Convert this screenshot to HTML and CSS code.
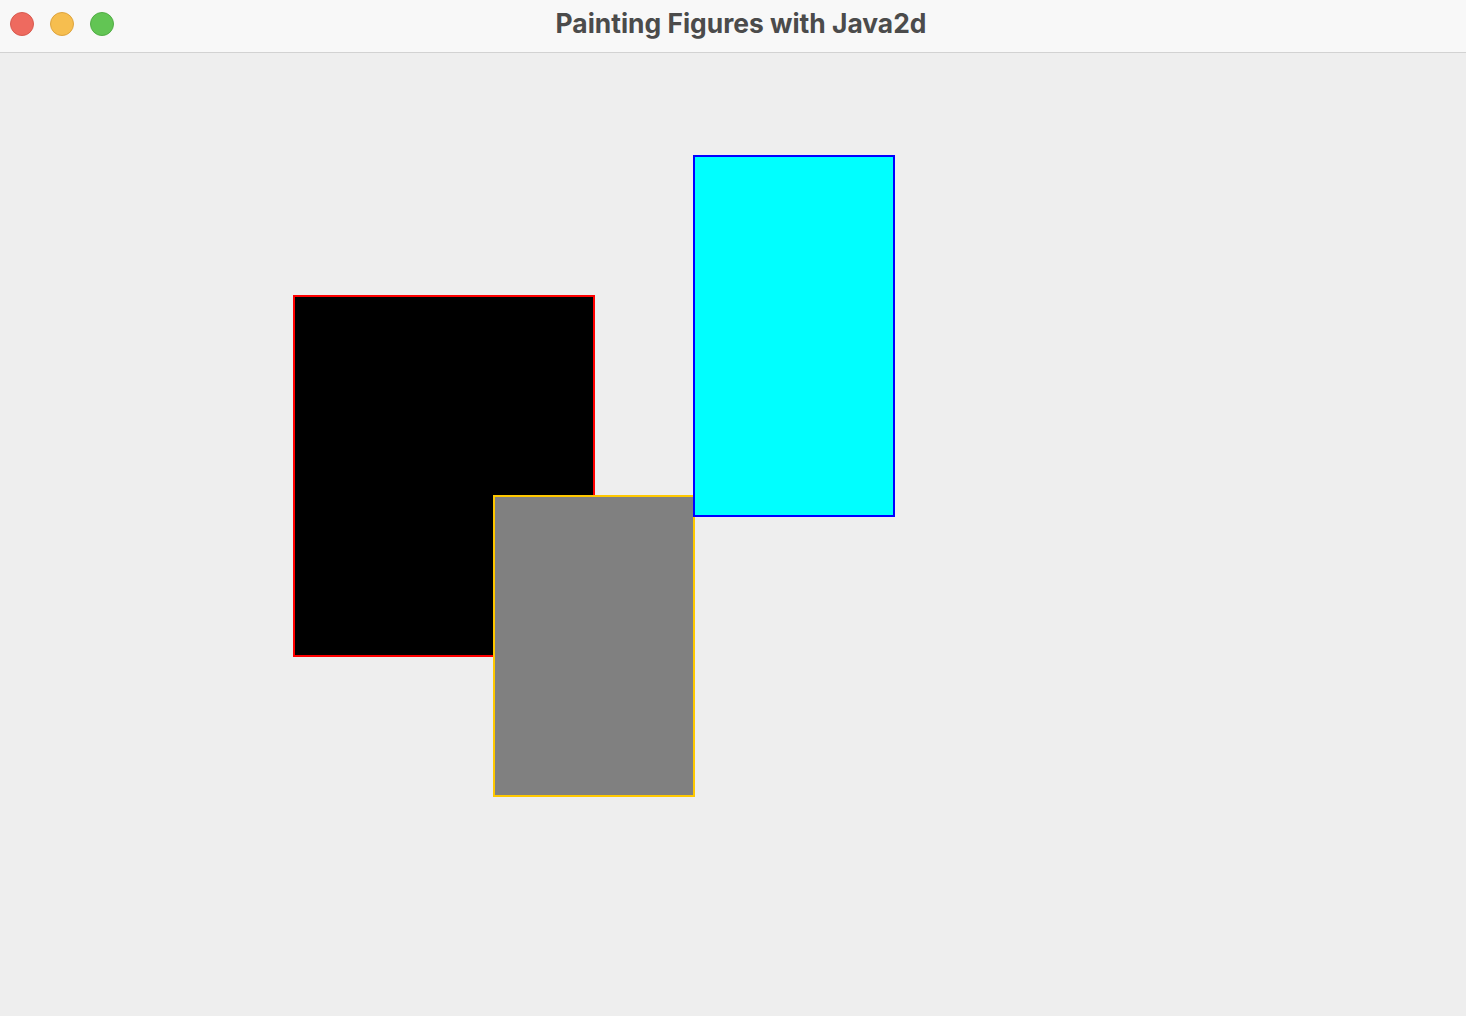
FILE: index.html
```html
<!DOCTYPE html>
<html>
<head>
<meta charset="utf-8">
<title>Painting Figures with Java2d</title>
<link rel="stylesheet" href="styles.css">
</head>
<body>
<div class="window">
  <div class="titlebar">
    <div class="lights">
      <span class="light close"></span>
      <span class="light min"></span>
      <span class="light max"></span>
    </div>
    <div class="title">Painting Figures with Java2d</div>
  </div>
  <div class="canvas">
    <div class="shape black"></div>
    <div class="shape gray"></div>
    <div class="shape cyan"></div>
  </div>
</div>
</body>
</html>
```
FILE: styles.css
```css
html, body {
  margin: 0;
  padding: 0;
  width: 1466px;
  height: 1016px;
  overflow: hidden;
  background: #eeeeee;
}
.window {
  display: flex;
  flex-direction: column;
  height: 1016px;
}
.titlebar {
  position: relative;
  height: 53px;
  box-sizing: border-box;
  background: #f8f8f8;
  border-bottom: 1px solid #d2d2d2;
  display: flex;
  align-items: center;
  justify-content: center;
}
.lights {
  position: absolute;
  left: 10px;
  top: 12px;
  display: flex;
  gap: 16px;
}
.light {
  width: 24px;
  height: 24px;
  border-radius: 50%;
  box-sizing: border-box;
  display: block;
}
.close { background: #ee6a5f; border: 1px solid #d85a4f; }
.min { background: #f6be4f; border: 1px solid #dea43e; }
.max { background: #62c554; border: 1px solid #52ad45; }
.title {
  font-family: Inter, "Open Sans", sans-serif;
  font-weight: 700;
  font-size: 26.4px;
  color: #4b4b4b;
  margin-top: -7px;
  margin-left: 16px;
}
.canvas {
  position: relative;
  flex: 1;
  background: #eeeeee;
}
.shape {
  position: absolute;
  box-sizing: border-box;
  border: 2px solid;
}
.black {
  left: 293px; top: 242px; width: 302px; height: 362px;
  background: #000000; border-color: #ff0000;
}
.gray {
  left: 493px; top: 442px; width: 202px; height: 302px;
  background: #808080; border-color: #ffc800;
}
.cyan {
  left: 693px; top: 102px; width: 202px; height: 362px;
  background: #00ffff; border-color: #0000ff;
}
```
